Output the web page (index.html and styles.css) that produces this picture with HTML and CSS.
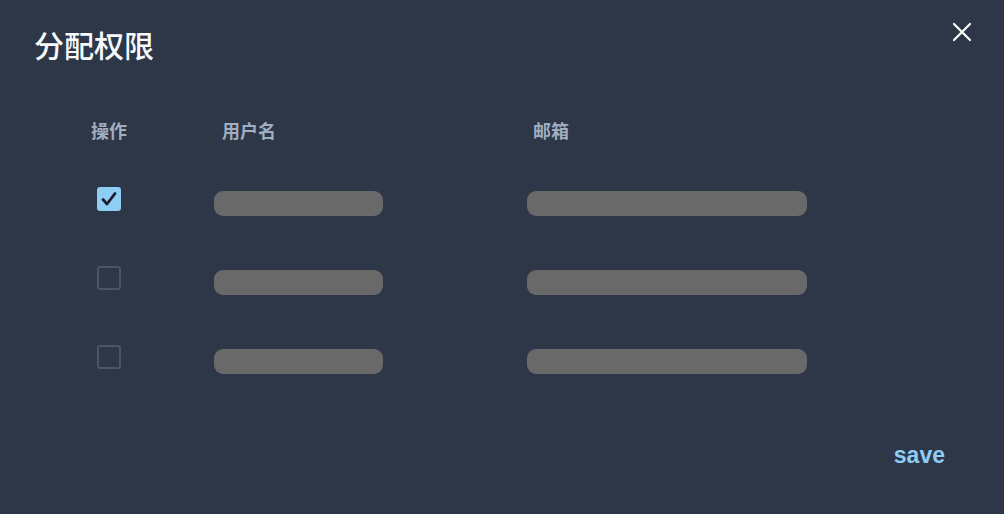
FILE: index.html
```html
<!DOCTYPE html>
<html lang="zh">
<head>
<meta charset="utf-8">
<link rel="stylesheet" href="styles.css">
</head>
<body>
<div class="modal">
  <div class="header">
    <h1 class="title">分配权限</h1>
    <button class="close" aria-label="close">
      <svg width="20" height="20" viewBox="0 0 20 20"><path d="M2 2 L18 18 M18 2 L2 18" stroke="#fff" stroke-width="2.2" stroke-linecap="round"/></svg>
    </button>
  </div>
  <div class="table">
    <div class="row head">
      <div class="c1">操作</div>
      <div class="c2">用户名</div>
      <div class="c3">邮箱</div>
    </div>
    <div class="row">
      <div class="c1"><span class="cb checked"><svg width="18" height="18" viewBox="0 0 18 18"><path d="M3 9.5 L7 14 L15 3.5" stroke="#1a202c" stroke-width="2.8" fill="none" stroke-linecap="round" stroke-linejoin="round"/></svg></span></div>
      <div class="c2"><span class="bar name"></span></div>
      <div class="c3"><span class="bar mail"></span></div>
    </div>
    <div class="row">
      <div class="c1"><span class="cb"></span></div>
      <div class="c2"><span class="bar name"></span></div>
      <div class="c3"><span class="bar mail"></span></div>
    </div>
    <div class="row">
      <div class="c1"><span class="cb"></span></div>
      <div class="c2"><span class="bar name"></span></div>
      <div class="c3"><span class="bar mail"></span></div>
    </div>
  </div>
  <div class="footer">
    <button class="save">save</button>
  </div>
</div>
</body>
</html>
```
FILE: styles.css
```css
* { box-sizing: border-box; }
html, body { margin: 0; padding: 0; }
body {
  width: 1004px;
  height: 514px;
  background: #2d3748;
  font-family: "Noto Sans CJK SC", "Noto Sans", sans-serif;
  overflow: hidden;
}
.modal {
  display: flex;
  flex-direction: column;
  height: 514px;
}
.header {
  display: flex;
  justify-content: space-between;
  align-items: flex-start;
  padding: 0 32px 0 34px;
}
.title {
  margin: 24px 0 0 0;
  font-size: 30px;
  line-height: 40px;
  font-weight: 500;
  color: #f7fafc;
}
.close {
  margin-top: 22px;
  width: 20px;
  height: 20px;
  padding: 0;
  border: 0;
  background: none;
  display: flex;
}
.table {
  margin-top: 46px;
  padding-left: 91px;
}
.row {
  display: grid;
  grid-template-columns: 131px 311px 300px;
  height: 79px;
  align-items: center;
}
.row.head {
  height: 40px;
  margin-bottom: 9px;
  font-size: 18px;
  font-weight: 600;
  color: #a0aec0;
}
.cb {
  display: flex;
  align-items: center;
  justify-content: center;
  width: 24px;
  height: 24px;
  margin-left: 6px;
  border: 2px solid #4a5568;
  border-radius: 3px;
}
.cb.checked {
  background: #90cdf4;
  border-color: #90cdf4;
}
.bar {
  display: block;
  height: 25px;
  background: #696969;
  border-radius: 9px;
}
.bar.name { width: 169px; margin-left: -8px; margin-top: 9px; }
.bar.mail { width: 280px; margin-left: -6px; margin-top: 9px; }
.footer {
  display: flex;
  justify-content: flex-end;
  padding: 45px 59px 0 0;
}
.save {
  border: 0;
  background: none;
  padding: 0;
  font-family: "Liberation Sans", Arial, sans-serif;
  font-size: 23px;
  font-weight: 700;
  color: #90cdf4;
  line-height: 28px;
}
```
